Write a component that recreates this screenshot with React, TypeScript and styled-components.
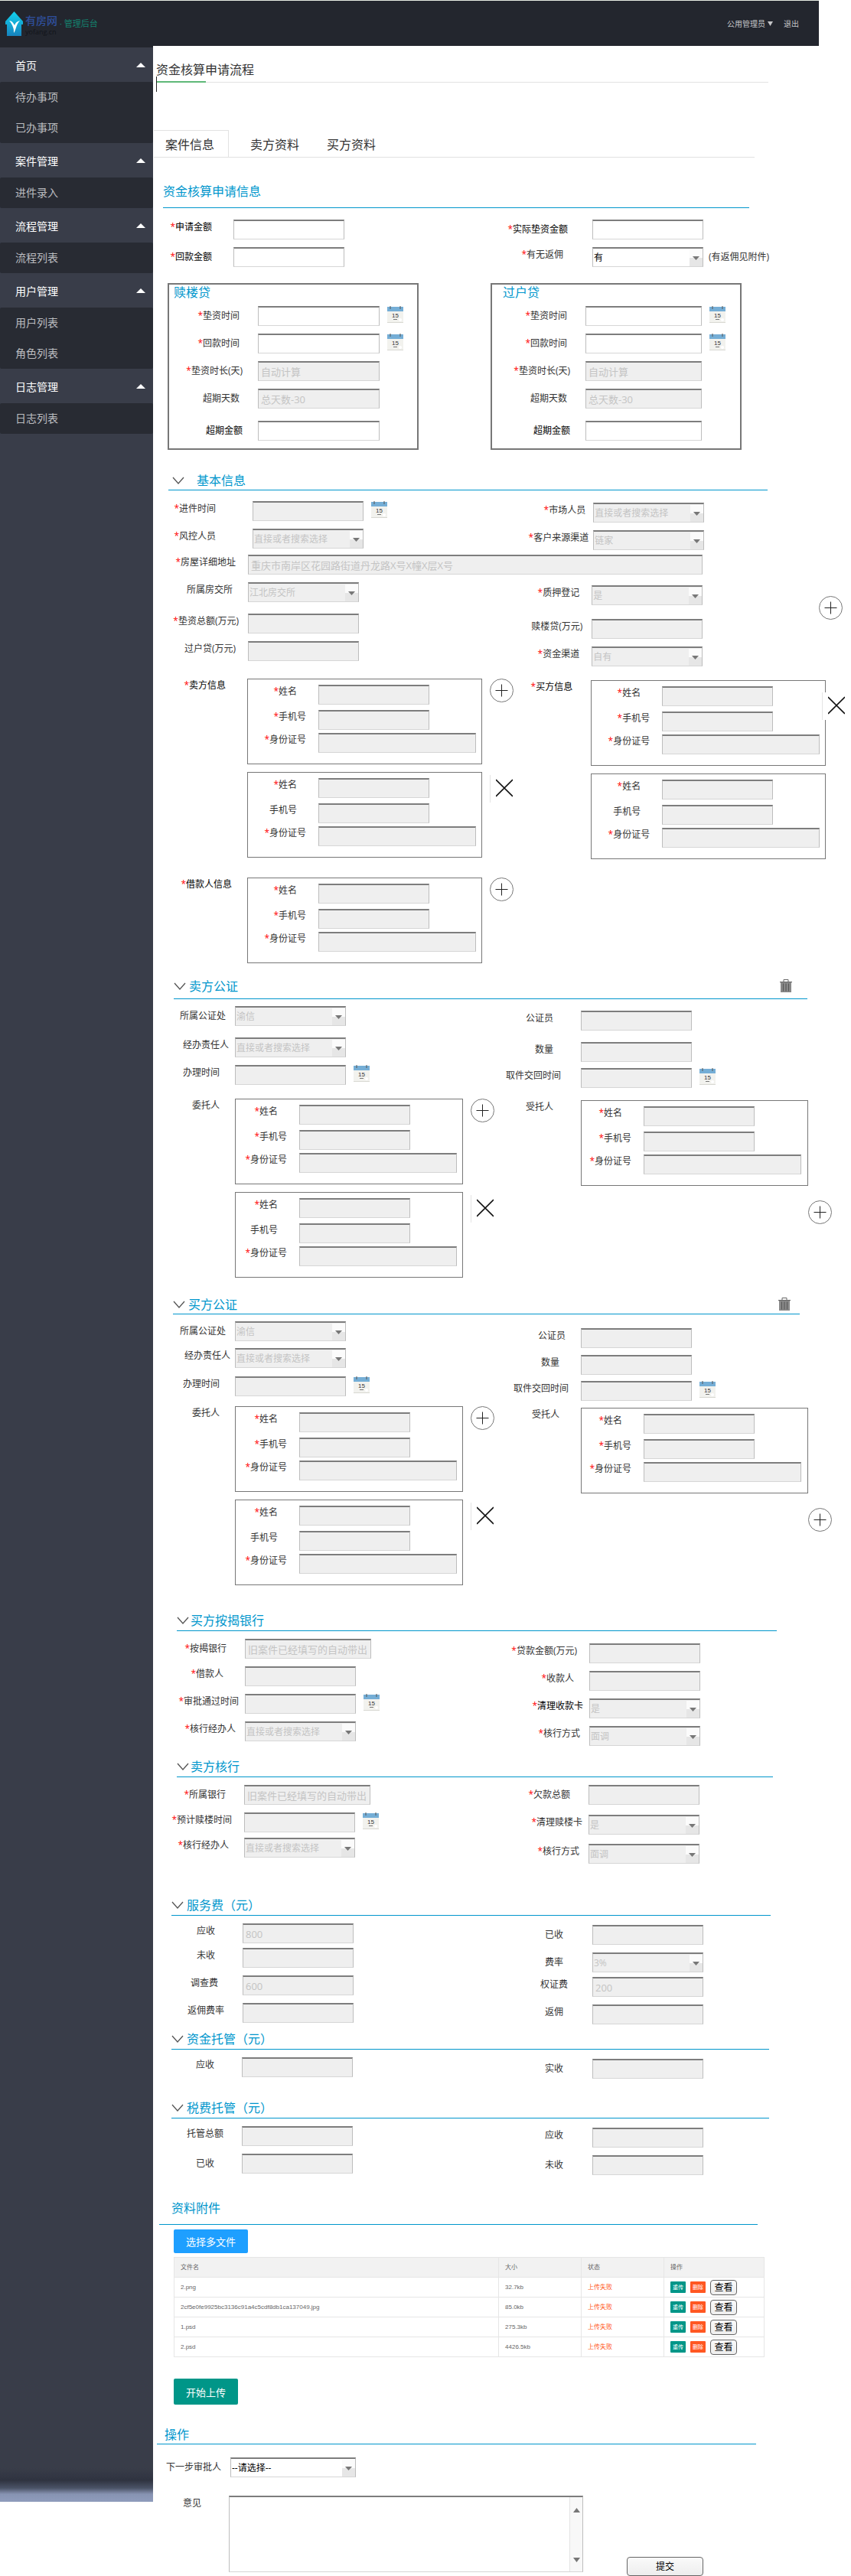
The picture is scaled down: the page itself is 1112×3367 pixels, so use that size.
import React, { createContext, useContext, useId, useState } from 'react';
import styled, { createGlobalStyle, css } from 'styled-components';

const GlobalStyle = createGlobalStyle`
  *, *::before, *::after { box-sizing: border-box; }
  body {
    margin: 0;
    background: #fff;
    color: #333;
    font: 12px/20px "Open Sans", "Noto Sans CJK SC", sans-serif;
  }
  button, input, select, textarea { font-family: inherit; margin: 0; }
  h1, h2, h3, ul { margin: 0; padding: 0; font-weight: 400; }
`;

const BLUE = '#0096cc';
const GREEN = '#009688';

/* ---------- top bar ---------- */

const TopBar = styled.header`
  height: 60px;
  margin-right: 42px;
  padding: 0 26px 0 7px;
  display: flex;
  align-items: center;
  justify-content: space-between;
  background: #23262e;
  border-top: 1px solid #e6ebe2;
`;
const Brand = styled.a`
  display: flex;
  align-items: center;
  gap: 3px;
  text-decoration: none;
  color: #14826f;
  font-size: 11px;
`;
const BrandWords = styled.span`
  display: flex;
  flex-direction: column;
  margin-top: 4px;
`;
const BrandName = styled.strong`
  font-weight: 500;
  font-size: 14px;
  line-height: 18px;
  color: #2f4f9c;
`;
const BrandHost = styled.span`
  font-size: 9px;
  line-height: 12px;
  color: #111319;
`;
const AccountNav = styled.nav`
  display: flex;
  align-items: center;
  gap: 14px;
`;
const AccountLink = styled.a`
  display: flex;
  align-items: center;
  gap: 3px;
  font-size: 10px;
  color: #c4c5c8;
  text-decoration: none;
`;

/* ---------- side menu ---------- */

const Shell = styled.div`
  display: flex;
`;
const Sidebar = styled.nav`
  flex: none;
  width: 200px;
  margin-bottom: 97px;
  border-top: 2px solid #23262e;
  background: linear-gradient(
    to top,
    #8f9cbc 0,
    #8793b2 10px,
    #4a5266 18px,
    #2f3340 28px,
    #393d49 44px
  );
`;
const MenuHead = styled.button`
  width: 100%;
  height: 45px;
  padding: 0 10px 0 20px;
  display: flex;
  align-items: center;
  justify-content: space-between;
  border: 0;
  background: #393d49;
  color: #fff;
  font-size: 14px;
`;
const MenuList = styled.ul`
  list-style: none;
  background: #282b33;
  border-radius: 2px;
`;
const MenuLink = styled.a`
  display: block;
  padding-left: 20px;
  font-size: 14px;
  line-height: 40px;
  color: #bcbdc0;
  text-decoration: none;
`;

/* ---------- page heading and tabs ---------- */

const Main = styled.main`
  flex: 1;
  min-width: 0;
`;
const PageHead = styled.div`
  position: relative;
  margin: 0 108px 0 4px;
  padding: 20px 0 5px;
  border-bottom: 1px solid #e2e2e2;
  &::before {
    content: '';
    position: absolute;
    left: 0;
    bottom: -1px;
    width: 65px;
    height: 2px;
    background: #5fb878;
  }
  &::after {
    content: '';
    position: absolute;
    left: 0;
    bottom: -13px;
    width: 1px;
    height: 20px;
    background: #222;
  }
`;
const PageTitle = styled.h1`
  font-size: 16px;
  line-height: 22px;
`;
const Tabs = styled.div`
  display: flex;
  margin: 62px 126px 0 1px;
  border-bottom: 1px solid #e2e2e2;
`;
const Tab = styled.button<{ $active?: boolean }>`
  height: 35px;
  padding: 0 18px;
  border: 0;
  background: none;
  color: #333;
  font-size: 16px;
  ${(p) =>
    p.$active &&
    css`
      margin-right: 10px;
      padding-left: 15px;
      border: solid #e2e2e2;
      border-width: 1px 1px 0 0;
    `}
`;

/* ---------- sections ---------- */

interface HeadProps {
  $top: number;
  $left: number;
  $right: number;
  $pad: number;
  $below: number;
  $end: number;
}
const SectionHead = styled.div<HeadProps>`
  display: flex;
  align-items: center;
  justify-content: space-between;
  margin: ${(p) => p.$top}px ${(p) => p.$right}px 0 ${(p) => p.$left}px;
  padding: 0 ${(p) => p.$end}px ${(p) => p.$below}px ${(p) => p.$pad}px;
  border-bottom: 1px solid ${BLUE};
`;
const SectionTitle = styled.h2`
  font-size: 16px;
  line-height: 24px;
  color: ${BLUE};
`;
const Toggle = styled.button<{ $gap: number }>`
  display: flex;
  align-items: center;
  gap: ${(p) => p.$gap}px;
  padding: 0;
  border: 0;
  background: none;
  color: inherit;
  font-size: inherit;
  line-height: inherit;
`;
const IconButton = styled.button`
  flex: none;
  display: flex;
  padding: 0;
  border: 0;
  background: none;
  line-height: 0;
`;

interface SectionProps {
  title: string;
  top: number;
  left: number;
  right: number;
  pad?: number;
  below?: number;
  end?: number;
  gap?: number;
  fold?: boolean;
  trash?: boolean;
  children: React.ReactNode;
}
function Section({ title, top, left, right, pad = 0, below = 0, end = 20, gap = 4, fold = true, trash, children }: SectionProps) {
  const [open, setOpen] = useState(true);
  return (
    <section>
      <SectionHead $top={top} $left={left} $right={right} $pad={pad} $below={below} $end={end}>
        <SectionTitle>
          {fold ? (
            <Toggle type="button" $gap={gap} aria-expanded={open} onClick={() => setOpen(!open)}>
              <Chevron />
              {title}
            </Toggle>
          ) : (
            title
          )}
        </SectionTitle>
        {trash && (
          <IconButton type="button" aria-label="删除">
            <Trash />
          </IconButton>
        )}
      </SectionHead>
      {open && children}
    </section>
  );
}

const Columns = styled.div<{ $wide?: boolean }>`
  display: grid;
  grid-template-columns: ${(p) => (p.$wide ? '52% minmax(0, 1fr)' : 'repeat(2, minmax(0, 1fr))')};
`;
const Stack = styled.div`
  display: flex;
  flex-direction: column;
`;
const FieldsWithAction = styled.div`
  display: flex;
  justify-content: space-between;
`;
const ActionSlot = styled.div`
  padding: 28px 11px 0 0;
`;

/* ---------- fields ---------- */

const LabelWidth = createContext(105);

const Row = styled.div<{ $top: number; $label: number; $mid?: boolean }>`
  display: grid;
  grid-template-columns: ${(p) => p.$label}px minmax(0, 1fr);
  align-items: ${(p) => (p.$mid ? 'center' : 'start')};
  margin-top: ${(p) => p.$top}px;
`;
const Label = styled.label<{ $gap: number; $strong?: boolean }>`
  padding-right: ${(p) => p.$gap}px;
  text-align: right;
  white-space: nowrap;
  color: ${(p) => (p.$strong ? '#000' : '#333')};
`;
const Star = styled.span`
  color: #f00;
`;
const Controls = styled.div`
  display: flex;
  align-items: flex-start;
  gap: 10px;
`;
const boxBorder = css`
  border: 1px solid #bdbdbd;
  border-top: 2px solid #7d7d7d;
  border-bottom-color: #d6d6d6;
  border-radius: 0;
  outline: 0;
`;
const TextInput = styled.input<{ $w: number }>`
  ${boxBorder}
  flex: none;
  width: ${(p) => p.$w}px;
  height: 26px;
  padding: 0 3px;
  background: #fff;
  font-size: 13px;
  color: #333;
  &:disabled {
    background: #efefef;
    color: #c4c4c4;
  }
`;
const SelectWrap = styled.span<{ $w: number }>`
  position: relative;
  flex: none;
  display: block;
  width: ${(p) => p.$w}px;
  height: 26px;
`;
const SelectBox = styled.select`
  ${boxBorder}
  appearance: none;
  width: 100%;
  height: 100%;
  padding: 0 20px 0 1px;
  background: #fff;
  font-size: 12px;
  color: #000;
  opacity: 1;
  &:disabled {
    background: #efefef;
    color: #c4c4c4;
    opacity: 1;
  }
`;
const SelectArrow = styled.span`
  position: absolute;
  top: 3px;
  right: 1px;
  bottom: 1px;
  width: 17px;
  display: flex;
  align-items: center;
  justify-content: center;
  background: linear-gradient(#fbfbfb 50%, #e6e6e6 50%);
  pointer-events: none;
`;
const Note = styled.span`
  margin-left: -3px;
  line-height: 26px;
`;

function Picker({ id, value, disabled = true, w = 145 }: { id: string; value: string; disabled?: boolean; w?: number }) {
  return (
    <SelectWrap $w={w}>
      <SelectBox id={id} disabled={disabled} defaultValue={value}>
        <option>{value}</option>
      </SelectBox>
      <SelectArrow>
        <Triangle w={9} h={5} fill="#777" down />
      </SelectArrow>
    </SelectWrap>
  );
}

interface FieldProps {
  label: string;
  req?: boolean;
  top?: number;
  gap?: number;
  w?: number;
  text?: string;
  pick?: string;
  live?: boolean;
  date?: boolean;
  mid?: boolean;
  strong?: boolean;
  note?: string;
}
function Field({ label, req, top = 10, gap = 20, w = 145, text, pick, live, date, mid, strong, note }: FieldProps) {
  const id = useId();
  const width = useContext(LabelWidth);
  return (
    <Row $top={top} $label={width} $mid={mid}>
      <Label htmlFor={id} $gap={gap} $strong={strong}>
        {req && <Star>*</Star>}
        {label}
      </Label>
      <Controls>
        {pick !== undefined ? (
          <Picker id={id} value={pick} disabled={!live} w={w} />
        ) : (
          <TextInput id={id} type="text" $w={w} disabled={!live} defaultValue={text} />
        )}
        {date && (
          <IconButton type="button" aria-label={`${label}：选择日期`}>
            <Calendar />
          </IconButton>
        )}
        {note && <Note>{note}</Note>}
      </Controls>
    </Row>
  );
}

/* ---------- loan panels ---------- */

const Loans = styled.div`
  display: flex;
  gap: 94px;
  margin: 21px 0 0 19px;
`;
const LoanPanel = styled.section`
  flex: none;
  width: 328px;
  padding-bottom: 10px;
  border: 2px solid #777;
`;
const LoanTitle = styled.h3<{ $pad: number }>`
  padding-left: ${(p) => p.$pad}px;
  font-size: 16px;
  line-height: 20px;
  color: ${BLUE};
`;
function Loan({ title, pad, label, w }: { title: string; pad: number; label: number; w: number }) {
  return (
    <LoanPanel>
      <LoanTitle $pad={pad}>{title}</LoanTitle>
      <LabelWidth.Provider value={label}>
        <Field label="垫资时间" req live date mid top={8} gap={24} w={w} />
        <Field label="回款时间" req live date mid gap={24} w={w} />
        <Field label="垫资时长(天)" req mid gap={20} w={w} text="自动计算" />
        <Field label="超期天数" mid gap={24} w={w} text="总天数-30" />
        <Field label="超期金额" live mid strong top={16} gap={20} w={w} />
      </LabelWidth.Provider>
    </LoanPanel>
  );
}

/* ---------- people cards ---------- */

const PartyLabel = styled.span<{ $gap: number; $strong?: boolean }>`
  padding-right: ${(p) => p.$gap}px;
  text-align: right;
  white-space: nowrap;
  line-height: 18px;
  color: ${(p) => (p.$strong ? '#000' : '#333')};
`;
const Cards = styled.div`
  display: flex;
  flex-direction: column;
  gap: 10px;
`;
const CardLine = styled.div`
  display: flex;
  align-items: flex-start;
`;
const Card = styled.div<{ $w: number }>`
  flex: none;
  width: ${(p) => p.$w}px;
  height: 112px;
  padding-top: 7px;
  border: 1px solid #777;
  label { line-height: 18px; }
`;
const AddButton = styled(IconButton)`
  margin-left: 10px;
`;
const RemoveButton = styled(IconButton)<{ $over?: boolean }>`
  width: 37px;
  height: 36px;
  padding-left: 7px;
  margin: 4px 0 0 10px;
  border-left: 1px solid #e4e4e4;
  background: #fff;
  ${(p) =>
    p.$over &&
    css`
      margin: 16px 0 0 -5px;
    `}
`;
const AddBelow = styled(IconButton)`
  align-self: flex-end;
  margin: 19px 25px 0 0;
`;

function Person({ w, label, phoneReq }: { w: number; label: number; phoneReq: boolean }) {
  return (
    <Card $w={w}>
      <LabelWidth.Provider value={label}>
        <Field label="姓名" req top={0} gap={28} />
        <Field label="手机号" req={phoneReq} top={7} gap={phoneReq ? 16 : 28} />
        <Field label="身份证号" req top={4} gap={16} w={206} />
      </LabelWidth.Provider>
    </Card>
  );
}

type Action = 'add' | 'remove' | 'over' | 'none';
interface PartyProps {
  label: string;
  req?: boolean;
  top: number;
  gap: number;
  w?: number;
  inner?: number;
  actions: Action[];
}
function Party({ label, req, top, gap, w = 307, inner = 92, actions }: PartyProps) {
  const width = useContext(LabelWidth);
  return (
    <Row $top={top} $label={width} role="group" aria-label={label}>
      <PartyLabel $gap={gap} $strong={req}>
        {req && <Star>*</Star>}
        {label}
      </PartyLabel>
      <Cards>
        {actions.map((action, i) => (
          <CardLine key={i}>
            <Person w={w} label={inner} phoneReq={i === 0} />
            {action === 'add' && (
              <AddButton type="button" aria-label={`添加${label}`}>
                <PlusRing />
              </AddButton>
            )}
            {(action === 'remove' || action === 'over') && (
              <RemoveButton type="button" $over={action === 'over'} aria-label={`移除${label}`}>
                <Cross />
              </RemoveButton>
            )}
          </CardLine>
        ))}
      </Cards>
    </Row>
  );
}

/* ---------- attachments ---------- */

const Attachments = styled.div`
  padding: 6px 113px 0 27px;
`;
const SolidButton = styled.button<{ $tone: string; $h: number; $top?: number }>`
  display: block;
  height: ${(p) => p.$h}px;
  margin-top: ${(p) => p.$top ?? 0}px;
  padding: 0 16px;
  border: 0;
  border-radius: 2px;
  background: ${(p) => p.$tone};
  color: #fff;
  font-size: 13px;
`;
const FileTable = styled.table`
  width: 100%;
  margin-top: 5px;
  border-collapse: collapse;
  table-layout: fixed;
  font: 8px/12px "Liberation Sans", "Noto Sans CJK SC", sans-serif;
  color: #666;
  tr { height: 26px; }
  th, td {
    padding: 0 8px;
    border: 1px solid #e6e6e6;
    text-align: left;
    font-weight: 400;
    white-space: nowrap;
  }
  th { background: #f2f2f2; }
`;
const Failed = styled.td`
  && { color: #ff5722; }
`;
const RowActions = styled.div`
  display: flex;
  align-items: center;
  gap: 6px;
`;
const MiniButton = styled.button<{ $tone: string }>`
  width: 20px;
  height: 15px;
  padding: 0;
  border: 0;
  border-radius: 1px;
  background: ${(p) => p.$tone};
  color: #fff;
  font-size: 7px;
  line-height: 15px;
`;
const PlainButton = styled.button<{ $w: number; $h: number }>`
  width: ${(p) => p.$w}px;
  height: ${(p) => p.$h}px;
  padding: 0;
  border: 1px solid #666;
  border-radius: 4px;
  background: linear-gradient(#fafafa, #ededed);
  color: #000;
  font-size: 12px;
  line-height: 18px;
`;
const FILES = [
  ['2.png', '32.7kb'],
  ['2cf5e0fe9925bc3136c91a4c5cdf8db1ca137049.jpg', '85.0kb'],
  ['1.psd', '275.3kb'],
  ['2.psd', '4426.5kb'],
];

/* ---------- approval ---------- */

const CommentLine = styled.div`
  display: flex;
  min-height: 105px;
  padding-right: 193px;
  justify-content: space-between;
  align-items: flex-start;
`;
const CommentBox = styled.div`
  ${boxBorder}
  display: flex;
  width: 463px;
  height: 100px;
`;
const CommentInput = styled.textarea`
  flex: 1;
  min-width: 0;
  padding: 3px;
  border: 0;
  outline: 0;
  resize: none;
  background: #fff;
  font-size: 12px;
`;
const Rail = styled.div`
  width: 17px;
  padding: 14px 0 12px;
  display: flex;
  flex-direction: column;
  align-items: center;
  justify-content: space-between;
  border-left: 1px solid #e4e4e4;
  background: #f8f8f8;
`;
const SubmitSlot = styled.div`
  align-self: flex-end;
  line-height: 0;
`;

/* ---------- drawings ---------- */

function Triangle({ w, h, fill, down }: { w: number; h: number; fill: string; down?: boolean }) {
  const points = down ? `0,0 ${w},0 ${w / 2},${h}` : `0,${h} ${w},${h} ${w / 2},0`;
  return (
    <svg width={w} height={h} aria-hidden="true">
      <polygon points={points} fill={fill} />
    </svg>
  );
}
function Logo() {
  return (
    <svg width="23" height="32" viewBox="0 0 23 32" aria-hidden="true">
      <defs>
        <linearGradient id="house" x1="0" y1="0" x2="0" y2="1">
          <stop offset="0" stopColor="#12d2ee" />
          <stop offset="1" stopColor="#1682bd" />
        </linearGradient>
      </defs>
      <path d="M11.5 0 23 13v4h-2v15H2V17H0v-4z" fill="url(#house)" />
      <path d="M5 12c3 0 5 2 7 6 1-3 3-5 7-6-3 3-4 6-5 9-1 3-2 6-3 7 0-3 0-4-.5-6C9 17 7 14 5 12z" fill="#fff" />
    </svg>
  );
}
function Chevron() {
  return (
    <svg width="16" height="10" viewBox="0 0 16 10" fill="none" stroke="#555" strokeWidth="1.3" aria-hidden="true">
      <path d="M1 1l7 8 7-8" />
    </svg>
  );
}
function PlusRing() {
  return (
    <svg width="31" height="31" viewBox="0 0 31 31" fill="none" stroke="#555" aria-hidden="true">
      <circle cx="15.5" cy="15.5" r="15" stroke="#777" />
      <path d="M15.5 7.5v16M7.5 15.5h16" stroke="#222" />
    </svg>
  );
}
function Cross() {
  return (
    <svg width="22" height="34" viewBox="0 0 22 34" fill="none" stroke="#111" strokeWidth="1.6" aria-hidden="true">
      <path d="M0 6l22 22M22 6L0 28" />
    </svg>
  );
}
function Trash() {
  return (
    <svg width="16" height="18" viewBox="0 0 16 18" aria-hidden="true">
      <path d="M5 3V.5h6V3" fill="none" stroke="#666" />
      <path d="M0 3h16v1.2H0zM1 4h14v13H1z" fill="#888" />
      <path d="M4.5 5.500v10M8 5.500v10M11.500 5.500v10" stroke="#555" />
      <path d="M0 3.500h16" stroke="#666" />
    </svg>
  );
}
function Calendar() {
  return (
    <svg width="21" height="22" viewBox="0 0 21 22" aria-hidden="true">
      <rect y="5" width="21" height="17" fill="#f2f2ee" />
      <path d="M0 21.500h21" stroke="#d8d8d2" />
      <rect y="1" width="21" height="6" fill="#75aed6" />
      <path d="M4 0v4M17 0v4" stroke="#555" />
      <text x="10.500" y="15" textAnchor="middle" fontSize="8" fontFamily="Liberation Sans, sans-serif" fill="#333">
        15
      </text>
      <path d="M8 17.500h5" stroke="#777" />
      <circle cx="17" cy="18" r="2" fill="#fff" />
    </svg>
  );
}

/* ---------- page ---------- */

const MENU: [string, string[]][] = [
  ['首页', ['待办事项', '已办事项']],
  ['案件管理', ['进件录入']],
  ['流程管理', ['流程列表']],
  ['用户管理', ['用户列表', '角色列表']],
  ['日志管理', ['日志列表']],
];

const SEARCH = '直接或者搜索选择';
const PREFILL = '旧案件已经填写的自动带出';

const Width = LabelWidth.Provider;

export default function App() {
  const nextId = useId();
  const noteId = useId();
  return (
    <>
      <GlobalStyle />
      <TopBar>
        <Brand href="#">
          <Logo />
          <BrandWords>
            <BrandName>有房网</BrandName>
            <BrandHost>yofang.cn</BrandHost>
          </BrandWords>
          <span>· 管理后台</span>
        </Brand>
        <AccountNav>
          <AccountLink href="#">
            公用管理员
            <Triangle w={7} h={6} fill="#c4c5c8" down />
          </AccountLink>
          <AccountLink href="#">退出</AccountLink>
        </AccountNav>
      </TopBar>
      <Shell>
        <Sidebar>
          {MENU.map(([head, items]) => (
            <div key={head}>
              <MenuHead type="button">
                {head}
                <Triangle w={12} h={6} fill="#fff" />
              </MenuHead>
              <MenuList>
                {items.map((item) => (
                  <li key={item}>
                    <MenuLink href="#">{item}</MenuLink>
                  </li>
                ))}
              </MenuList>
            </div>
          ))}
        </Sidebar>
        <Main>
          <PageHead>
            <PageTitle>资金核算申请流程</PageTitle>
          </PageHead>
          <Tabs role="tablist">
            <Tab type="button" role="tab" aria-selected="true" $active>案件信息</Tab>
            <Tab type="button" role="tab">卖方资料</Tab>
            <Tab type="button" role="tab">买方资料</Tab>
          </Tabs>

          <Section title="资金核算申请信息" top={32} left={13} right={133} below={9} fold={false}>
            <Columns>
              <Width value={105}>
                <Stack>
                  <Field label="申请金额" req live strong top={15} gap={28} />
                  <Field label="回款金额" req live strong mid gap={28} />
                </Stack>
              </Width>
              <Width value={118}>
                <Stack>
                  <Field label="实际垫资金额" req live strong mid top={15} gap={32} />
                  <Field label="有无返佣" req live gap={38} pick="有" note="(有返佣见附件)" />
                </Stack>
              </Width>
            </Columns>
            <Loans>
              <Loan title="赎楼贷" pad={6} label={116} w={159} />
              <Loan title="过户贷" pad={14} label={122} w={152} />
            </Loans>
          </Section>

          <Section title="基本信息" top={28} left={20} right={109} pad={5} gap={16}>
            <Columns $wide>
              <Width value={130}>
                <Stack>
                  <Field label="进件时间" req date top={14} gap={48} />
                  <Field label="风控人员" req gap={48} pick={SEARCH} />
                </Stack>
              </Width>
              <Width value={101}>
                <Stack>
                  <Field label="市场人员" req top={16} gap={10} pick={SEARCH} />
                  <Field label="客户来源渠道" req gap={6} pick="链家" />
                </Stack>
              </Width>
            </Columns>
            <Width value={124}>
              <Field label="房屋详细地址" req top={6} gap={16} w={594} text="重庆市南岸区花园路街道丹龙路X号X幢X层X号" />
            </Width>
            <Columns $wide>
              <Width value={124}>
                <Stack>
                  <Field label="所属房交所" gap={20} pick="江北房交所" />
                  <Field label="垫资总额(万元)" req top={15} gap={12} />
                  <Field label="过户贷(万元)" gap={16} />
                </Stack>
              </Width>
              <Width value={99}>
                <FieldsWithAction>
                  <Stack>
                    <Field label="质押登记" req top={14} gap={16} pick="是" />
                    <Field label="赎楼贷(万元)" top={18} gap={12} />
                    <Field label="资金渠道" req gap={16} pick="自有" />
                  </Stack>
                  <ActionSlot>
                    <IconButton type="button" aria-label="添加">
                      <PlusRing />
                    </IconButton>
                  </ActionSlot>
                </FieldsWithAction>
              </Width>
            </Columns>
            <Columns $wide>
              <Width value={123}>
                <Stack>
                  <Party label="卖方信息" req top={16} gap={28} actions={['add', 'remove']} />
                  <Party label="借款人信息" req top={26} gap={20} actions={['add']} />
                </Stack>
              </Width>
              <Width value={98}>
                <Stack>
                  <Party label="买方信息" req top={18} gap={24} actions={['over', 'none']} />
                </Stack>
              </Width>
            </Columns>
          </Section>

          <Section title="卖方公证" top={18} left={27} right={57} below={4} trash>
            <Columns>
              <Width value={107}>
                <Stack>
                  <Field label="所属公证处" mid top={9} gap={12} pick="渝信" />
                  <Field label="经办责任人" top={15} gap={8} pick={SEARCH} />
                  <Field label="办理时间" date gap={20} />
                  <Party label="委托人" top={18} gap={20} w={298} inner={83} actions={['add', 'remove']} />
                </Stack>
              </Width>
              <Width value={103}>
                <Stack>
                  <Field label="公证员" top={15} gap={36} />
                  <Field label="数量" top={15} gap={36} />
                  <Field label="取件交回时间" date top={8} gap={26} />
                  <Party label="受托人" top={16} gap={36} w={297} inner={81} actions={['none']} />
                  <AddBelow type="button" aria-label="添加受托人">
                    <PlusRing />
                  </AddBelow>
                </Stack>
              </Width>
            </Columns>
          </Section>

          <Section title="买方公证" top={23} left={26} right={67} end={12} trash>
            <Columns>
              <Width value={107}>
                <Stack>
                  <Field label="所属公证处" mid top={9} gap={12} pick="渝信" />
                  <Field label="经办责任人" top={9} gap={6} pick={SEARCH} />
                  <Field label="办理时间" date top={11} gap={20} />
                  <Party label="委托人" top={13} gap={20} w={298} inner={83} actions={['add', 'remove']} />
                </Stack>
              </Width>
              <Width value={103}>
                <Stack>
                  <Field label="公证员" top={18} gap={20} />
                  <Field label="数量" top={9} gap={28} />
                  <Field label="取件交回时间" date top={8} gap={16} />
                  <Party label="受托人" top={9} gap={28} w={297} inner={81} actions={['none']} />
                  <AddBelow type="button" aria-label="添加受托人">
                    <PlusRing />
                  </AddBelow>
                </Stack>
              </Width>
            </Columns>
          </Section>

          <Section title="买方按揭银行" top={34} left={31} right={97} below={1} gap={2}>
            <Columns>
              <Width value={120}>
                <Stack>
                  <Field label="按揭银行" req mid gap={24} w={165} text={PREFILL} />
                  <Field label="借款人" req gap={28} />
                  <Field label="审批通过时间" req date gap={8} />
                  <Field label="核行经办人" req gap={12} pick={SEARCH} />
                </Stack>
              </Width>
              <Width value={114}>
                <Stack>
                  <Field label="贷款金额(万元)" req top={16} gap={16} />
                  <Field label="收款人" req gap={20} />
                  <Field label="清理收款卡" req strong gap={8} pick="是" />
                  <Field label="核行方式" req gap={12} pick="面调" />
                </Stack>
              </Width>
            </Columns>
          </Section>

          <Section title="卖方核行" top={15} left={31} right={102} below={1} gap={2}>
            <Columns>
              <Width value={119}>
                <Stack>
                  <Field label="所属银行" req mid gap={24} w={165} text={PREFILL} />
                  <Field label="预计赎楼时间" req date gap={16} />
                  <Field label="核行经办人" req top={7} gap={20} pick={SEARCH} />
                </Stack>
              </Width>
              <Width value={113}>
                <Stack>
                  <Field label="欠款总额" req mid gap={24} />
                  <Field label="清理赎楼卡" req top={13} gap={8} pick="是" />
                  <Field label="核行方式" req top={12} gap={12} pick="面调" />
                </Stack>
              </Width>
            </Columns>
          </Section>

          <Section title="服务费（元）" top={42} left={24} right={105} below={1}>
            <Columns>
              <Width value={117}>
                <Stack>
                  <Field label="应收" gap={36} text="800" />
                  <Field label="未收" top={6} gap={36} />
                  <Field label="调查费" gap={32} text="600" />
                  <Field label="返佣费率" gap={24} />
                </Stack>
              </Width>
              <Width value={118}>
                <Stack>
                  <Field label="已收" mid top={12} gap={38} />
                  <Field label="费率" mid gap={38} pick="3%" />
                  <Field label="权证费" top={6} gap={32} text="200" />
                  <Field label="返佣" gap={38} />
                </Stack>
              </Width>
            </Columns>
          </Section>

          <Section title="资金托管（元）" top={7} left={24} right={107} below={1}>
            <Columns>
              <Width value={116}>
                <Stack>
                  <Field label="应收" gap={36} />
                </Stack>
              </Width>
              <Width value={118}>
                <Stack>
                  <Field label="实收" mid top={12} gap={38} />
                </Stack>
              </Width>
            </Columns>
          </Section>

          <Section title="税费托管（元）" top={26} left={24} right={107} below={1}>
            <Columns>
              <Width value={116}>
                <Stack>
                  <Field label="托管总额" gap={24} />
                  <Field label="已收" mid gap={36} />
                </Stack>
              </Width>
              <Width value={118}>
                <Stack>
                  <Field label="应收" top={12} gap={38} />
                  <Field label="未收" mid gap={38} />
                </Stack>
              </Width>
            </Columns>
          </Section>

          <Section title="资料附件" top={31} left={8} right={122} pad={16} below={9} fold={false}>
            <Attachments>
              <SolidButton type="button" $tone="#1e9fff" $h={31}>选择多文件</SolidButton>
              <FileTable>
                <colgroup>
                  <col width="55%" />
                  <col width="14%" />
                  <col width="14%" />
                  <col width="17%" />
                </colgroup>
                <thead>
                  <tr>
                    <th scope="col">文件名</th>
                    <th scope="col">大小</th>
                    <th scope="col">状态</th>
                    <th scope="col">操作</th>
                  </tr>
                </thead>
                <tbody>
                  {FILES.map(([name, size]) => (
                    <tr key={name}>
                      <td>{name}</td>
                      <td>{size}</td>
                      <Failed>上传失败</Failed>
                      <td>
                        <RowActions>
                          <MiniButton type="button" $tone={GREEN}>重传</MiniButton>
                          <MiniButton type="button" $tone="#ff5722">删除</MiniButton>
                          <PlainButton type="button" $w={35} $h={20}>查看</PlainButton>
                        </RowActions>
                      </td>
                    </tr>
                  ))}
                </tbody>
              </FileTable>
              <SolidButton type="button" $tone={GREEN} $h={34} $top={28}>开始上传</SolidButton>
            </Attachments>
          </Section>

          <Section title="操作" top={27} left={5} right={124} pad={10} fold={false}>
            <Row $top={17} $label={101} $mid>
              <Label htmlFor={nextId} $gap={12}>下一步审批人</Label>
              <Picker id={nextId} value="--请选择--" disabled={false} w={164} />
            </Row>
            <Row $top={24} $label={99}>
              <Label htmlFor={noteId} $gap={36}>意见</Label>
              <CommentLine>
                <CommentBox>
                  <CommentInput id={noteId} />
                  <Rail aria-hidden="true">
                    <Triangle w={9} h={6} fill="#777" />
                    <Triangle w={9} h={6} fill="#777" down />
                  </Rail>
                </CommentBox>
                <SubmitSlot>
                  <PlainButton type="submit" $w={100} $h={25}>提交</PlainButton>
                </SubmitSlot>
              </CommentLine>
            </Row>
          </Section>
        </Main>
      </Shell>
    </>
  );
}
